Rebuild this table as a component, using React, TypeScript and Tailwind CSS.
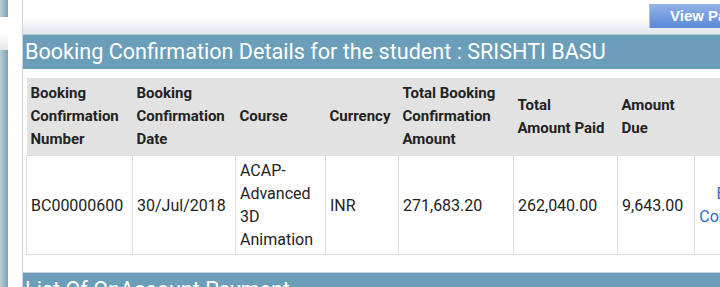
import React from 'react';

interface BookingRow {
  number: string;
  date: string;
  course: string[];
  currency: string;
  total: string;
  paid: string;
  due: string;
}

const headers: { lines: string[]; width: string }[] = [
  { lines: ['Booking', 'Confirmation', 'Number'], width: 'w-[106px]' },
  { lines: ['Booking', 'Confirmation', 'Date'], width: 'w-[103px]' },
  { lines: ['Course'], width: 'w-[90px]' },
  { lines: ['Currency'], width: 'w-[73px]' },
  { lines: ['Total Booking', 'Confirmation', 'Amount'], width: 'w-[115px]' },
  { lines: ['Total', 'Amount Paid'], width: 'w-[104px]' },
  { lines: ['Amount', 'Due'], width: 'w-[77px]' },
  { lines: [''], width: 'w-[102px]' },
];

const rows: BookingRow[] = [
  {
    number: 'BC00000600',
    date: '30/Jul/2018',
    course: ['ACAP-', 'Advanced', '3D', 'Animation'],
    currency: 'INR',
    total: '271,683.20',
    paid: '262,040.00',
    due: '9,643.00',
  },
];

const SideStrip: React.FC = () => (
  <div className="w-[8px] shrink-0 flex flex-col">
    <div className="h-[17px] bg-gradient-to-r from-[#bccdd7] to-[#7e9fb3]" />
    <div className="h-[33px] bg-gradient-to-b from-white via-white to-[#e2e7ea]" />
    <div className="flex-1 bg-gradient-to-r from-[#bccdd7] to-[#7e9fb3]" />
  </div>
);

const App: React.FC = () => {
  return (
    <div className="w-[720px] h-[287px] overflow-hidden bg-white flex font-['Roboto',sans-serif] text-[#222]">
      <SideStrip />
      <div className="w-[14px] shrink-0 bg-white" />
      <div className="w-px shrink-0 bg-[#ccd3d8]" />

      <div className="w-[697px] shrink-0 flex flex-col">
        <div className="h-[34px] shrink-0 flex items-start pt-[4px] pl-[626px] bg-gradient-to-b from-white from-50% to-[#e2e7eb]">
          <button className="h-[24px] w-[150px] shrink-0 pl-[20px] text-left whitespace-nowrap text-white text-[15px] font-bold font-['Liberation_Sans',sans-serif] bg-gradient-to-b from-[#93b3e8] to-[#5c88d8] border-l border-[#a9c0ea]">
            View Payment Details
          </button>
        </div>
        <div className="h-px shrink-0 bg-[#b7cad6]" />
        <div className="h-[34px] shrink-0 bg-[#6a9eb9] text-white text-[21.6px] leading-[33px] pl-[2px] whitespace-nowrap">
          Booking Confirmation Details for the student : SRISHTI BASU
        </div>
        <div className="h-[9px] shrink-0" />

        <div className="ml-[3px] shrink-0">
          <table className="border-collapse table-fixed w-[770px] text-left">
            <thead>
              <tr className="bg-[#e2e2e2] h-[77px]">
                {headers.map((h, i) => (
                  <th
                    key={i}
                    className={`${h.width} px-[4px] py-[4px] align-middle font-bold text-[15px] leading-[23px] text-[#222] whitespace-nowrap`}
                  >
                    {h.lines.map((l, j) => (
                      <div key={j}>{l}</div>
                    ))}
                  </th>
                ))}
              </tr>
            </thead>
            <tbody>
              {rows.map((r) => (
                <tr key={r.number} className="h-[98px] text-[16px] leading-[23px]">
                  <td className="border border-[#dddddd] px-[4px] py-[3px] align-middle">{r.number}</td>
                  <td className="border border-[#dddddd] px-[4px] py-[3px] align-middle">{r.date}</td>
                  <td className="border border-[#dddddd] px-[4px] py-[3px] align-middle">
                    {r.course.map((c, j) => (
                      <div key={j}>{c}</div>
                    ))}
                  </td>
                  <td className="border border-[#dddddd] px-[4px] py-[3px] align-middle">{r.currency}</td>
                  <td className="border border-[#dddddd] px-[4px] py-[3px] align-middle">{r.total}</td>
                  <td className="border border-[#dddddd] px-[4px] py-[3px] align-middle">{r.paid}</td>
                  <td className="border border-[#dddddd] px-[4px] py-[3px] align-middle">{r.due}</td>
                  <td className="border border-[#dddddd] px-[4px] py-[3px] align-middle text-center text-[#2a6fc0]">
                    <div>Booking</div>
                    <div>Confirmation</div>
                  </td>
                </tr>
              ))}
            </tbody>
          </table>
        </div>

        <div className="h-[17px] shrink-0" />
        <div className="h-px shrink-0 bg-[#c7d2d9]" />
        <div className="h-[34px] shrink-0 bg-[#6a9eb9] text-white text-[21.6px] leading-[33px] pl-[2px] whitespace-nowrap">
          List Of OnAccount Payment
        </div>
      </div>
    </div>
  );
};

export default App;
